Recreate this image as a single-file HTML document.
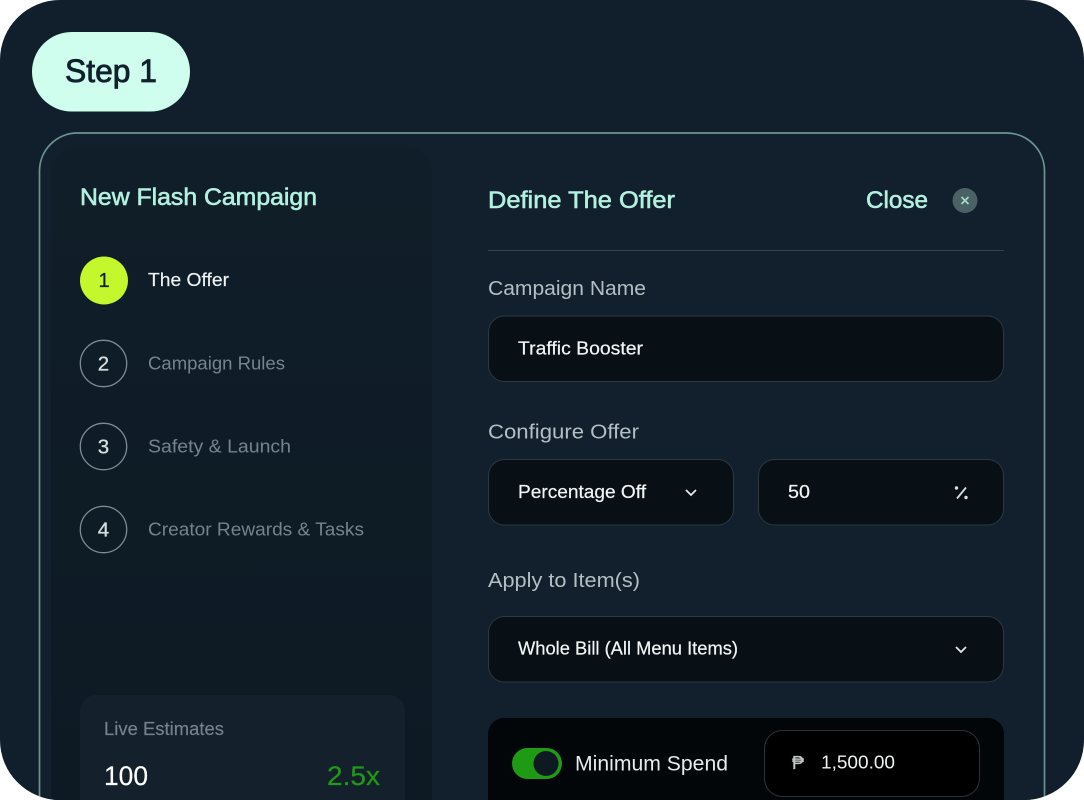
<!DOCTYPE html>
<html><head><meta charset="utf-8"><title>Step 1</title>
<style>
html,body{margin:0;padding:0;background:#fff;width:1084px;height:800px;overflow:hidden}
svg{display:block}
text{font-family:"Liberation Sans","DejaVu Sans",sans-serif;white-space:pre}
</style></head><body>
<svg width="1084" height="800" viewBox="0 0 1084 800" xmlns="http://www.w3.org/2000/svg">
<defs>
<linearGradient id="side" x1="0" y1="0" x2="0" y2="1"><stop offset="0" stop-color="#101e29"/><stop offset="1" stop-color="#0d1a24"/></linearGradient>
<clipPath id="frame"><rect x="0" y="0" width="1084" height="800" rx="60"/></clipPath>
</defs>
<g clip-path="url(#frame)">
<rect x="0" y="0" width="1084" height="800" fill="#101f2b"/>
<rect x="32" y="32" width="158" height="79.500" rx="39.700" fill="#cffdee"/>
<text x="65" y="82" font-size="32" fill="#10202c" stroke="#10202c" stroke-width=".8" textLength="92" lengthAdjust="spacingAndGlyphs">Step 1</text>

<path d="M39.500 801V171a38 38 0 0 1 38-38H1006.500a38 38 0 0 1 38 38V801" fill="#11202c" stroke="#6b9490" stroke-width="1.700"/>
<path d="M51 801V172a26 26 0 0 1 26-26H406a26 26 0 0 1 26 26V801Z" fill="url(#side)"/>
<text x="80" y="205" font-size="24" fill="#b4f0e0" stroke="#b4f0e0" stroke-width=".6" textLength="237" lengthAdjust="spacingAndGlyphs">New Flash Campaign</text>

<circle cx="104" cy="280.500" r="24" fill="#c5f82c"/>
<text x="104" y="287" font-size="20" text-anchor="middle" fill="#10202c" stroke="#10202c" stroke-width=".3">1</text>
<text x="148" y="286" font-size="18" fill="#eef3f3" stroke="#eef3f3" stroke-width=".15" textLength="81" lengthAdjust="spacingAndGlyphs">The Offer</text>

<circle cx="103.500" cy="363.500" r="23.200" fill="none" stroke="#7c8c92" stroke-width="1.300"/>
<text x="103.500" y="370.500" font-size="20.500" text-anchor="middle" fill="#d5dddf" stroke="#d5dddf" stroke-width=".3">2</text>
<text x="148" y="369.500" font-size="18" fill="#74848c" textLength="137" lengthAdjust="spacingAndGlyphs">Campaign Rules</text>

<circle cx="103.500" cy="446.500" r="23.200" fill="none" stroke="#7c8c92" stroke-width="1.300"/>
<text x="103.500" y="453.500" font-size="20.500" text-anchor="middle" fill="#d5dddf" stroke="#d5dddf" stroke-width=".3">3</text>
<text x="148" y="452.500" font-size="18" fill="#74848c" textLength="143" lengthAdjust="spacingAndGlyphs">Safety &amp; Launch</text>

<circle cx="103.500" cy="529.500" r="23.200" fill="none" stroke="#7c8c92" stroke-width="1.300"/>
<text x="103.500" y="536.500" font-size="20.500" text-anchor="middle" fill="#d5dddf" stroke="#d5dddf" stroke-width=".3">4</text>
<text x="148" y="535.500" font-size="18" fill="#74848c" textLength="216" lengthAdjust="spacingAndGlyphs">Creator Rewards &amp; Tasks</text>

<rect x="80" y="695" width="325" height="130" rx="16" fill="#14212c"/>
<text x="104" y="735" font-size="18" fill="#74848c" stroke="#74848c" stroke-width=".15" textLength="120" lengthAdjust="spacingAndGlyphs">Live Estimates</text>
<text x="104" y="785" font-size="27" fill="#ffffff" stroke="#ffffff" stroke-width=".2" textLength="44" lengthAdjust="spacingAndGlyphs">100</text>
<text x="327" y="785" font-size="27" fill="#1f9a14" stroke="#1f9a14" stroke-width=".2" textLength="53" lengthAdjust="spacingAndGlyphs">2.5x</text>

<text x="488" y="208" font-size="24" fill="#b4f0e0" stroke="#b4f0e0" stroke-width=".6" textLength="187" lengthAdjust="spacingAndGlyphs">Define The Offer</text>
<text x="866" y="208" font-size="24" fill="#b4f0e0" stroke="#b4f0e0" stroke-width=".6" textLength="62" lengthAdjust="spacingAndGlyphs">Close</text>
<circle cx="965" cy="200.500" r="12.500" fill="#4a6265"/>
<path d="M961.500 197l7 7M968.500 197l-7 7" stroke="#a5d8cc" stroke-width="1.700" fill="none"/>
<rect x="488" y="250" width="516" height="1" fill="#34444f"/>

<text x="488" y="295" font-size="20" fill="#b3bfc3" textLength="158" lengthAdjust="spacingAndGlyphs">Campaign Name</text>
<rect x="488.500" y="316" width="515" height="65.500" rx="16" fill="#080f15" stroke="#2c3843"/>
<text x="518" y="354.500" font-size="18" fill="#f2f5f5" stroke="#f2f5f5" stroke-width=".2" textLength="125" lengthAdjust="spacingAndGlyphs">Traffic Booster</text>

<text x="488" y="438.500" font-size="20" fill="#b3bfc3" textLength="151" lengthAdjust="spacingAndGlyphs">Configure Offer</text>
<rect x="488.500" y="459.500" width="245" height="65.500" rx="16" fill="#080f15" stroke="#2c3843"/>
<text x="518" y="498" font-size="18" fill="#f2f5f5" stroke="#f2f5f5" stroke-width=".2" textLength="128" lengthAdjust="spacingAndGlyphs">Percentage Off</text>
<path d="M686 490l5 5 5-5" fill="none" stroke="#e6ecec" stroke-width="1.700"/>
<rect x="758.500" y="459.500" width="245" height="65.500" rx="16" fill="#080f15" stroke="#2c3843"/>
<text x="788" y="498" font-size="18" fill="#f2f5f5" stroke="#f2f5f5" stroke-width=".2" textLength="22" lengthAdjust="spacingAndGlyphs">50</text>
<path d="M966 487.500l-9 11" stroke="#d8dfe0" stroke-width="1.800" fill="none"/>
<circle cx="956.500" cy="488" r="1.700" fill="#d8dfe0"/><circle cx="966" cy="497.500" r="1.700" fill="#d8dfe0"/>

<text x="488" y="587" font-size="20" fill="#b3bfc3" textLength="152" lengthAdjust="spacingAndGlyphs">Apply to Item(s)</text>
<rect x="488.500" y="616.500" width="515" height="65.500" rx="16" fill="#080f15" stroke="#2c3843"/>
<text x="518" y="654.500" font-size="18" fill="#f2f5f5" stroke="#f2f5f5" stroke-width=".2" textLength="220" lengthAdjust="spacingAndGlyphs">Whole Bill (All Menu Items)</text>
<path d="M956 647l5 5 5-5" fill="none" stroke="#e6ecec" stroke-width="1.700"/>

<rect x="488" y="718" width="516" height="110" rx="16" fill="#020609"/>
<rect x="512" y="748" width="50" height="31" rx="15.500" fill="#1f9a14"/>
<circle cx="546" cy="763.500" r="12.500" fill="#0d1a22"/>
<text x="575" y="770.500" font-size="21" fill="#e6eaea" textLength="153" lengthAdjust="spacingAndGlyphs">Minimum Spend</text>
<rect x="764.500" y="730.500" width="215" height="66" rx="18" fill="#000" stroke="#2c3238"/>
<text x="792" y="769" font-size="18" fill="#c4c8c8" stroke="#c4c8c8" stroke-width=".2" textLength="12" lengthAdjust="spacingAndGlyphs">₱</text>
<text x="821" y="768.500" font-size="18" fill="#eef0f0" textLength="74" lengthAdjust="spacingAndGlyphs">1,500.00</text>
</g>
</svg>
</body></html>
